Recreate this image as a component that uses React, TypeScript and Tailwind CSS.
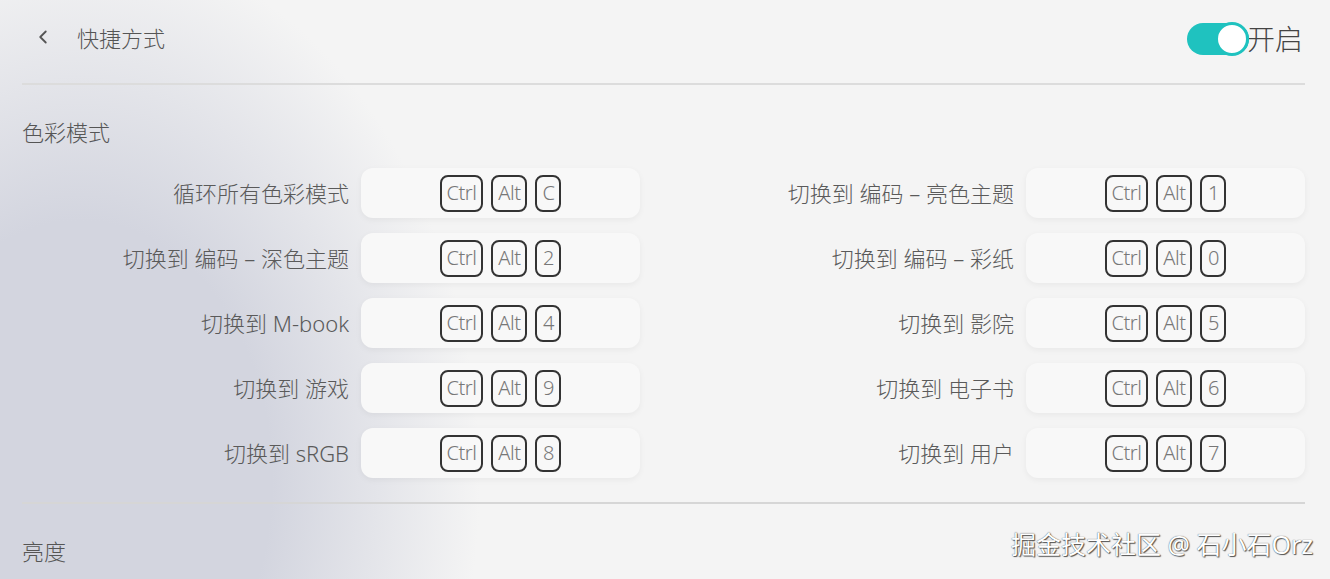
import { ChevronLeft } from "lucide-react";

type Shortcut = { label: string; key: string };

const left: Shortcut[] = [
  { label: "循环所有色彩模式", key: "C" },
  { label: "切换到 编码 – 深色主题", key: "2" },
  { label: "切换到 M-book", key: "4" },
  { label: "切换到 游戏", key: "9" },
  { label: "切换到 sRGB", key: "8" },
];

const right: Shortcut[] = [
  { label: "切换到 编码 – 亮色主题", key: "1" },
  { label: "切换到 编码 – 彩纸", key: "0" },
  { label: "切换到 影院", key: "5" },
  { label: "切换到 电子书", key: "6" },
  { label: "切换到 用户", key: "7" },
];

const font = "font-['Noto_Sans','Noto_Sans_CJK_SC',sans-serif]";

const Key = ({ children }: { children: string }) => (
  <span className="h-[37px] min-w-[26px] px-[5px] flex items-center justify-center rounded-[8px] border-2 border-[#333] text-[20px] font-light text-[#777] leading-none tracking-[-0.5px]">
    {children}
  </span>
);

const Row = ({ item }: { item: Shortcut }) => (
  <div className="flex items-center gap-3">
    <span className="flex-1 text-right text-[22px] font-light text-[#5a5a5a] whitespace-nowrap">
      {item.label}
    </span>
    <div className="w-[279px] h-[50px] rounded-xl bg-[#f8f8f8] shadow-[0_2px_6px_rgba(0,0,0,0.05)] flex items-center justify-center gap-2">
      <Key>Ctrl</Key>
      <Key>Alt</Key>
      <Key>{item.key}</Key>
    </div>
  </div>
);

export default function App() {
  return (
    <div
      className={`${font} relative w-[1330px] h-[579px] overflow-hidden bg-[#f4f4f4] bg-[radial-gradient(ellipse_400px_540px_at_80px_480px,#d3d5df_48%,#f4f4f4_100%)]`}
    >
      <div className="pl-[22px] pr-[25px]">
        {/* Header */}
        <div className="h-[83px] pb-[6px] flex items-center justify-between">
          <div className="flex items-center">
            <ChevronLeft className="w-[22px] h-[22px] text-[#555] ml-[10px] -mt-1" strokeWidth={2} />
            <span className="ml-[23px] text-[22px] font-light text-[#555]">快捷方式</span>
          </div>
          <div className="flex items-center mr-[2px]">
            <div className="relative w-[62px] h-[32px] rounded-full bg-[#1fc2bf]">
              <span className="absolute right-0 top-[-1px] w-[34px] h-[34px] rounded-full bg-white border-[3px] border-[#1fc2bf]" />
            </div>
            <span className="-ml-[2px] text-[28px] font-light text-[#444]">开启</span>
          </div>
        </div>
        <div className="h-[2px] bg-[#dcdcdc]" />

        {/* 色彩模式 */}
        <div className="pt-[34px] text-[22px] font-light text-[#555] leading-[26px]">色彩模式</div>
        <div className="mt-[23px] grid grid-cols-2 gap-x-[47px]">
          <div className="flex flex-col gap-[15px]">
            {left.map((s) => (
              <Row key={s.label} item={s} />
            ))}
          </div>
          <div className="flex flex-col gap-[15px]">
            {right.map((s) => (
              <Row key={s.label} item={s} />
            ))}
          </div>
        </div>
        <div className="mt-[24px] h-[2px] bg-[#d6d6d6]" />

        {/* 亮度 */}
        <div className="pt-[34px] text-[22px] font-light text-[#555] leading-[26px]">亮度</div>
      </div>

      {/* watermark */}
      <span className="absolute right-[17px] bottom-[16px] text-[25px] text-white [text-shadow:0_0_1px_#333,1px_1px_1px_#555]">
        掘金技术社区 @ 石小石Orz
      </span>
    </div>
  );
}
